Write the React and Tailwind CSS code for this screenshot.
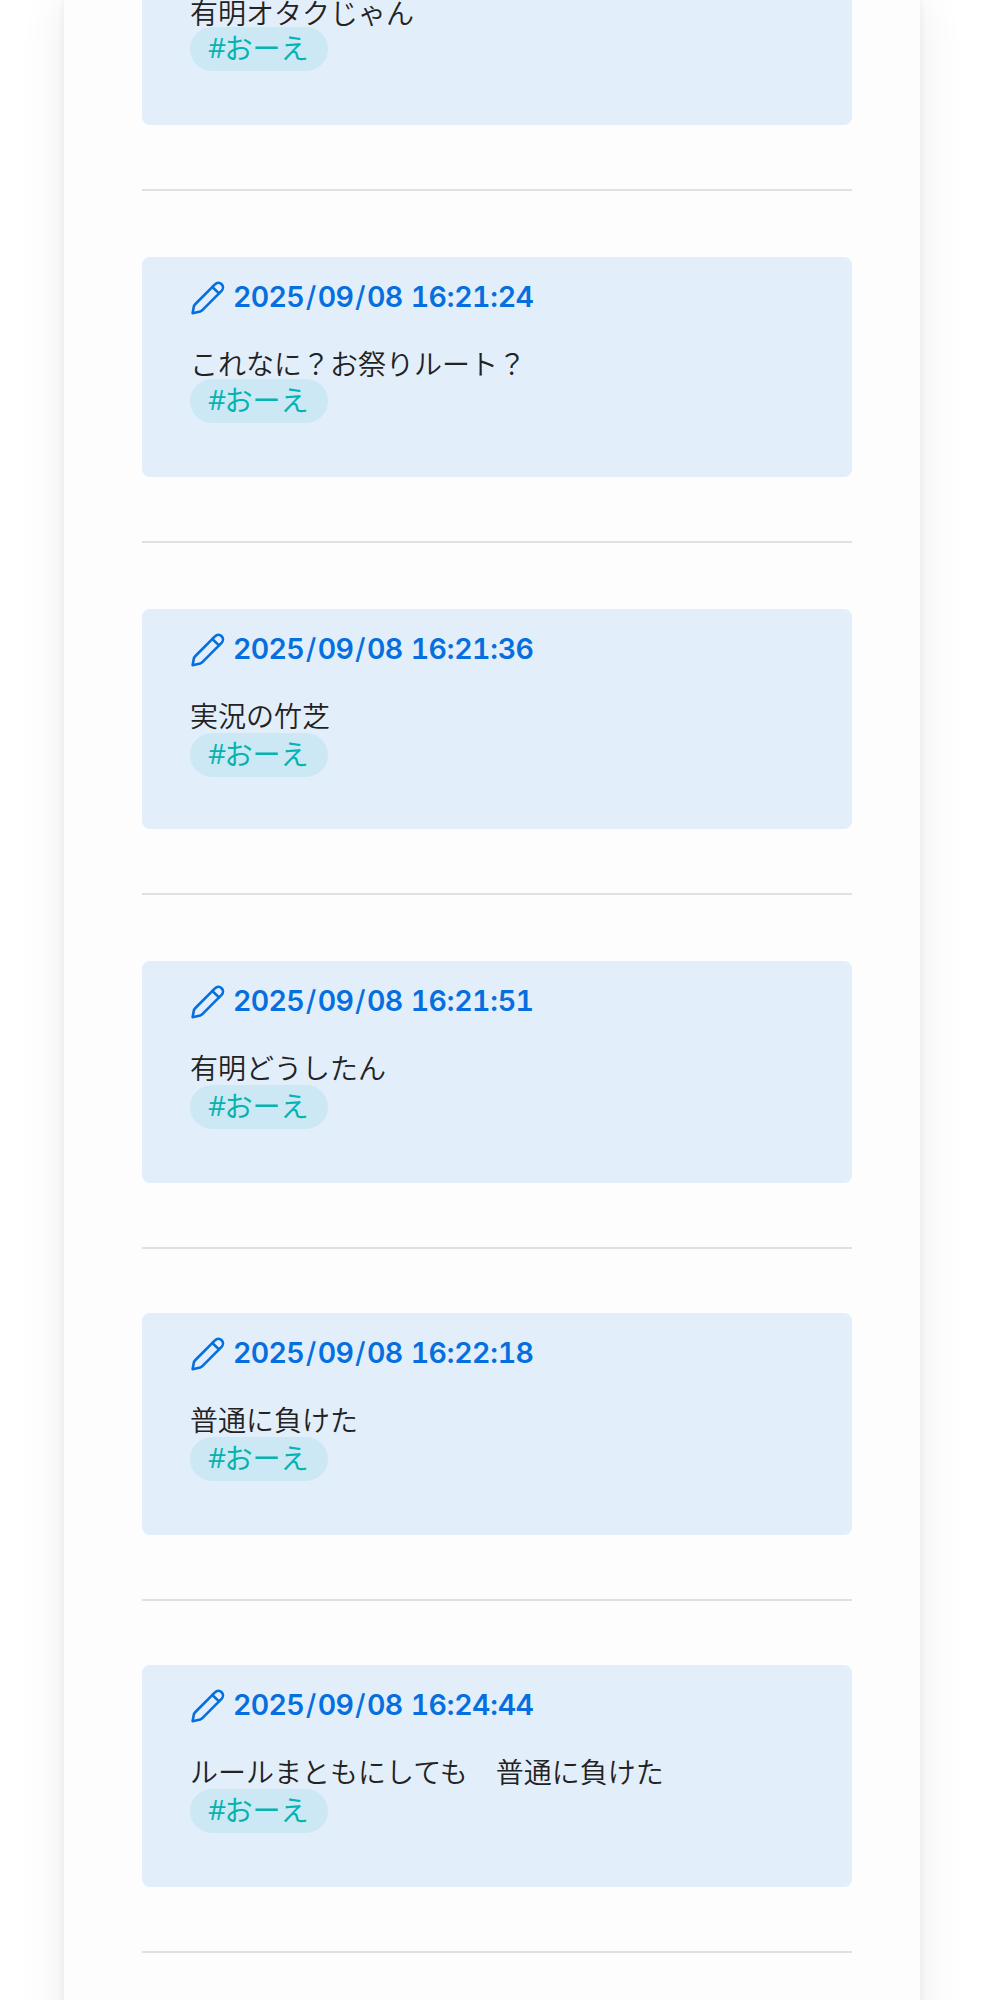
import React from 'react';

const POSTS = [
  { text: '有明オタクじゃん', card: 'h-[125px]', line: 'mt-0', tag: 'mt-0', rule: 'mb-[66px]' },
  { time: '2025/09/08 16:21:24', text: 'これなに？お祭りルート？', card: 'h-[220px]', line: 'mt-[30px]', tag: '-mt-0.5', rule: 'mb-[66px]' },
  { time: '2025/09/08 16:21:36', text: '実況の竹芝', card: 'h-[220px]', line: 'mt-[30px]', tag: 'mt-0', rule: 'mb-[66px]' },
  { time: '2025/09/08 16:21:51', text: '有明どうしたん', card: 'h-[222px]', line: 'mt-[30px]', tag: 'mt-0', rule: 'mb-16' },
  { time: '2025/09/08 16:22:18', text: '普通に負けた', card: 'h-[222px]', line: 'mt-[30px]', tag: 'mt-0', rule: 'mb-16' },
  { time: '2025/09/08 16:24:44', text: 'ルールまともにしても　普通に負けた', card: 'h-[222px]', line: 'mt-[30px]', tag: 'mt-0', rule: 'mb-16' },
];

const SEPARATORS = {
  '/': 'pl-[1.8px] pr-[2px] font-medium',
  ':': 'px-[0.5px]',
  ' ': 'pr-[1.4px]',
};

function PenIcon() {
  return (
    <svg
      viewBox="0 0 36 36"
      className="w-9 h-9 mt-[3px] shrink-0"
      fill="none"
      stroke="currentColor"
      strokeWidth="2.6"
      strokeLinecap="round"
      strokeLinejoin="round"
    >
      <path d="M2.6 33.2 L3.9 26.2 Q4.2 25.2 5.4 24 L25.2 4.2 A4.6 4.6 0 0 1 31.8 10.6 L12.6 29.8 Q11.4 31 10.2 31.4 Z" />
      <path d="M22.3 7 L29 13.4" />
    </svg>
  );
}

function Post({ post }) {
  return (
    <article className={`${post.card} ${post.time ? 'rounded-lg pt-5' : 'rounded-b-lg'} bg-[#e2eefa] px-12`}>
      {post.time && (
        <div className="flex h-10 text-[#066fe0]">
          <PenIcon />
          <time className="ml-[7px] leading-10 font-['Inter',sans-serif] text-[28.5px] font-semibold tabular-nums tracking-[-0.68px] whitespace-pre">
            {post.time.split(/([/: ])/).map((part, i) => (
              <span key={i} className={SEPARATORS[part]}>{part}</span>
            ))}
          </time>
        </div>
      )}
      <p
        className={`${post.line} ${post.time ? 'h-[34px] leading-8' : 'h-[27px] leading-6'} text-[28px] font-[350] text-[#222] whitespace-nowrap`}
      >
        {post.text}
      </p>
      <span
        className={`${post.tag} flex w-[138px] h-11 pl-[18px] leading-10 rounded-full bg-[#cce8f4] text-[28px] text-[#05b3b0] whitespace-nowrap`}
      >
        <span className="font-['Open_Sans',sans-serif] tracking-[-1.5px]">#</span>おーえ
      </span>
    </article>
  );
}

export default function App() {
  return (
    <div className="h-[2000px] overflow-hidden bg-white font-['Noto_Sans_CJK_JP',sans-serif]">
      <main className="ml-16 w-[856px] h-[2100px] pl-[78px] pr-[68px] bg-[#fdfdfd] shadow-[0_0_44px_rgba(0,0,0,0.08),0_0_8px_rgba(0,0,0,0.06)]">
        {POSTS.map((post) => (
          <div key={post.text} className="flow-root">
            <Post post={post} />
            <hr className={`mt-16 ${post.rule} border-t-2 border-[#e0e0e0]`} />
          </div>
        ))}
      </main>
    </div>
  );
}
